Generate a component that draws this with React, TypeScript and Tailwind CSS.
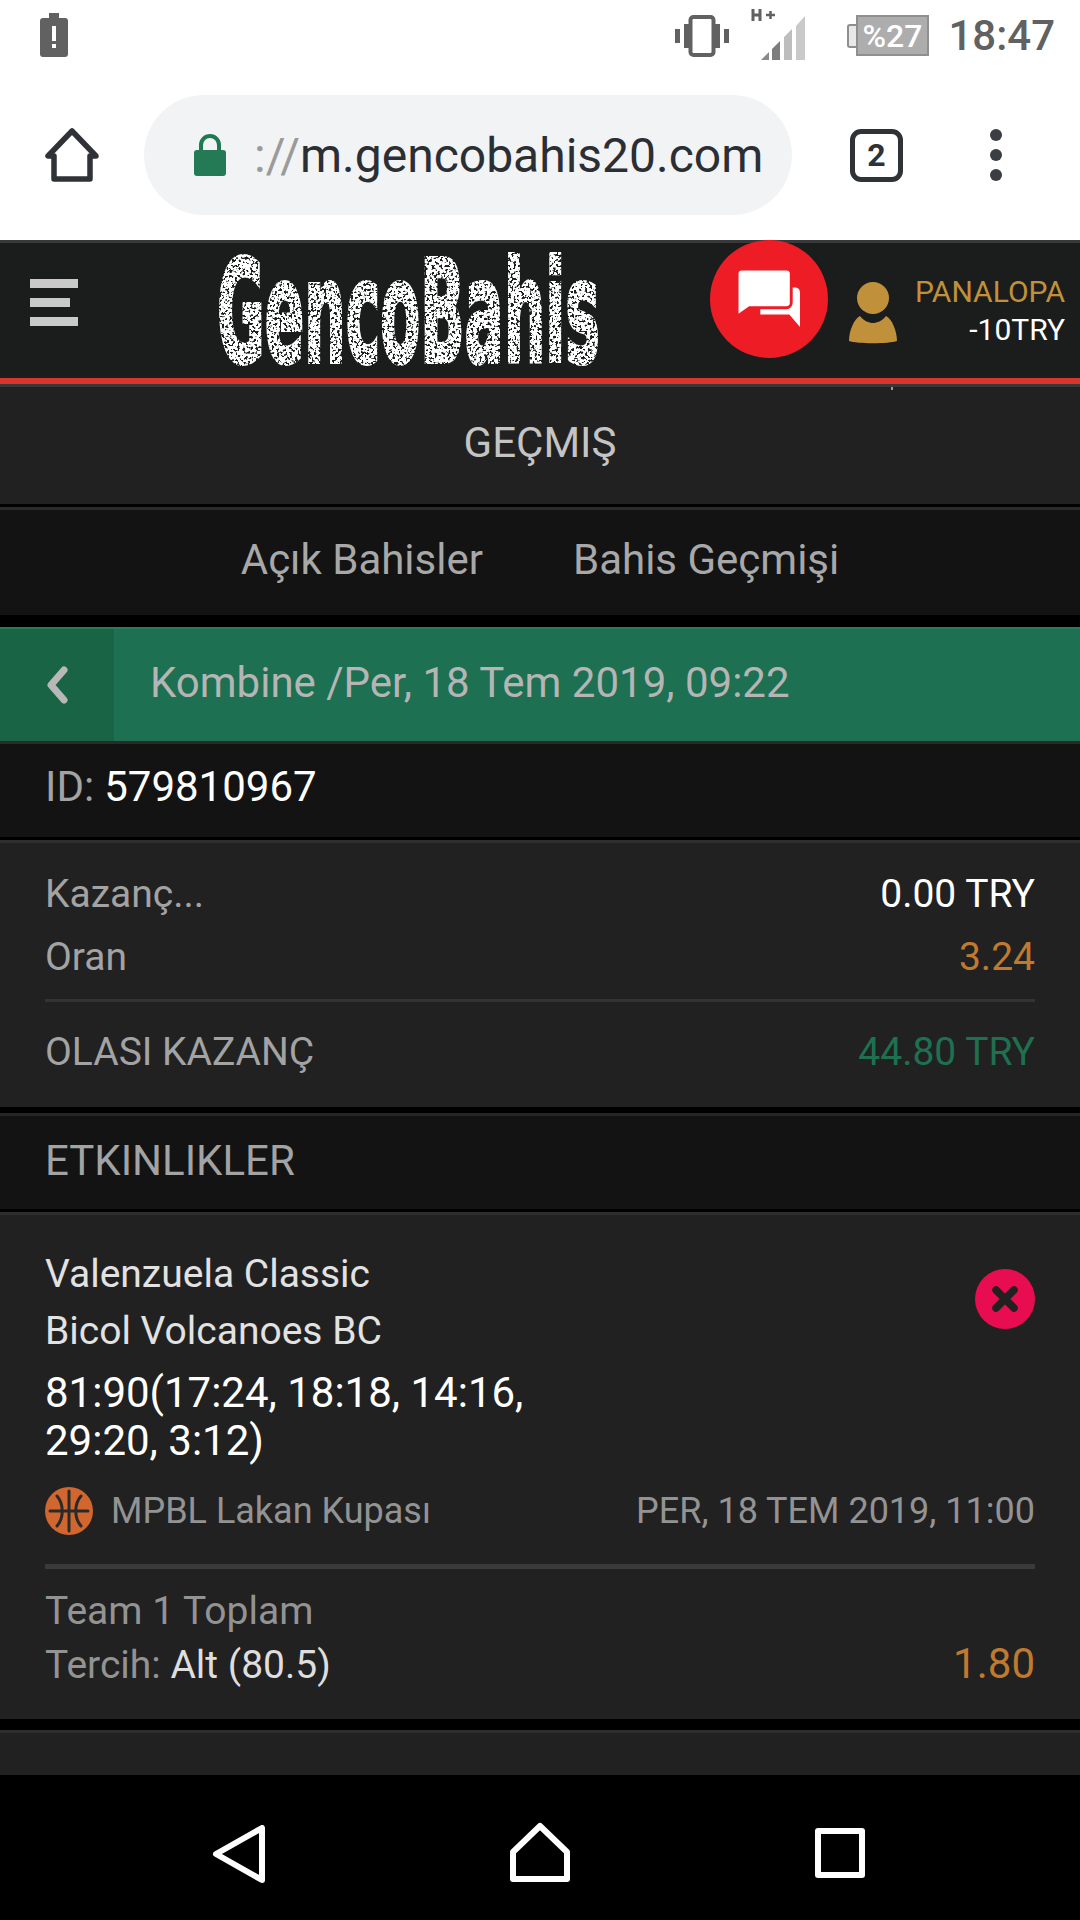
const StatusBar = () => (
  <div className="flex h-[72px] items-center bg-white pl-[40px] pr-[25px]">
    <svg width="28" height="44" viewBox="0 0 28 44" className="mt-[-2px]">
      <path d="M9 0h10v5h6a3 3 0 0 1 3 3v33a3 3 0 0 1-3 3H3a3 3 0 0 1-3-3V8a3 3 0 0 1 3-3h6z" fill="#616161" />
      <rect x="12" y="13" width="4" height="15" fill="#fff" />
      <rect x="12" y="31" width="4" height="4" fill="#fff" />
    </svg>
    <svg width="54" height="42" viewBox="0 0 54 42" className="ml-[607px] mt-[-1px]">
      <rect x="0" y="14" width="5" height="14" fill="#616161" />
      <rect x="9" y="9" width="5" height="24" fill="#616161" />
      <rect x="15.500" y="2" width="23" height="38" rx="3" fill="none" stroke="#616161" strokeWidth="4" />
      <rect x="40" y="9" width="5" height="24" fill="#616161" />
      <rect x="49" y="14" width="5" height="14" fill="#616161" />
    </svg>
    <svg width="60" height="52" viewBox="0 0 60 52" className="ml-[22px] mt-[-4px]">
      <path d="M0 1v12M0 7h7M7 1v12" transform="translate(2 0)" stroke="#616161" strokeWidth="3" fill="none" />
      <path d="M15 7h9M19.500 3v8" stroke="#616161" strokeWidth="2.500" fill="none" />
      <path d="M10 52l8-8v8z" fill="#8a8a8a" />
      <path d="M21 41l8-8v19h-8z" fill="#7d7d7d" />
      <path d="M33 29l8-8v31h-8z" fill="#bdbdbd" />
      <path d="M45 18l9-10v44h-9z" fill="#c9c9c9" />
    </svg>
    <div className="ml-[36px] mt-[-1px] flex h-[41px] w-[82px] items-center">
      <div className="h-[24px] w-[9px] rounded-l-[3px] border-y-2 border-l-2 border-[#8f8f8f] bg-[#e8e8e8]" />
      <div className="flex h-full flex-1 items-center justify-center border-2 border-[#8f8f8f] bg-[#adadad] text-[32px] font-medium leading-none text-white">
        %27
      </div>
    </div>
    <div className="ml-auto text-[42px] font-medium leading-none text-[#616161]">18:47</div>
  </div>
);

const Toolbar = () => (
  <div className="flex h-[168px] items-center bg-white pl-[45px]">
    <svg width="54" height="54" viewBox="0 0 54 54" className="mt-[-2px]">
      <path d="M27 3 3 28h6v23h36V28h6z" fill="none" stroke="#2f3237" strokeWidth="5.500" strokeLinejoin="round" />
    </svg>
    <div className="ml-[45px] mt-[-2px] flex h-[120px] w-[648px] items-center rounded-full bg-[#f1f3f4] pl-[50px]">
      <svg width="32" height="42" viewBox="0 0 32 42">
        <path d="M7 18v-7a9 9 0 0 1 18 0v7" fill="none" stroke="#1e7a52" strokeWidth="4" />
        <rect x="0" y="16" width="32" height="26" rx="3" fill="#237a55" />
      </svg>
      <div className="ml-[28px] mt-[2px] text-[48px] leading-none text-[#2b2e33]">
        <span className="text-[#9a9a9a]">://</span>m.gencobahis20.com
      </div>
    </div>
    <div className="ml-[58px] mt-[-2px] flex h-[53px] w-[53px] items-center justify-center rounded-[11px] border-[5px] border-[#2f3237] text-[32px] font-bold leading-none text-[#2f3237]">
      2
    </div>
    <div className="ml-[87px] mt-[-2px] flex flex-col gap-[8px]">
      <span className="h-[12px] w-[12px] rounded-full bg-[#3a3d42]" />
      <span className="h-[12px] w-[12px] rounded-full bg-[#3a3d42]" />
      <span className="h-[12px] w-[12px] rounded-full bg-[#3a3d42]" />
    </div>
  </div>
);

const Logo = () => (
  <svg width="390" height="116" viewBox="0 0 390 116">
    <defs>
      <filter id="speckle" x="0" y="0" width="100%" height="100%" filterUnits="objectBoundingBox">
        <feTurbulence type="fractalNoise" baseFrequency="0.38" numOctaves="2" seed="7" result="n" />
        <feColorMatrix in="n" type="matrix" values="0 0 0 0 0 0 0 0 0 0 0 0 0 0 0 0 0 0 -11 6.900" result="m" />
        <feComposite in="SourceGraphic" in2="m" operator="in" />
      </filter>
    </defs>
    <g filter="url(#speckle)">
      {/* squeezed wide bold font, closest thing to the logo's condensed letters */}
      <text
        transform="translate(3 110) scale(0.41 1)"
        fontFamily="'DejaVu Sans','Liberation Sans',sans-serif"
        fontWeight="700"
        fontSize="142"
        fill="#fff"
        stroke="#fff"
        strokeWidth="4"
      >
        GencoBahis
      </text>
    </g>
  </svg>
);

const SiteHeader = () => (
  <div className="relative border-y-[3px] border-[#36383a]">
    <div className="flex h-[135px] items-center bg-[#1b1d1d] pl-[30px] pr-[15px]">
      <div className="mt-[-16px] flex flex-col gap-[10px]">
        <div className="h-[9px] w-[48px] bg-[#c9c9c9]" />
        <div className="h-[9px] w-[40px] bg-[#c9c9c9]" />
        <div className="h-[9px] w-[48px] bg-[#c9c9c9]" />
      </div>
      <div className="ml-[136px] mt-[-2px]">
        <Logo />
      </div>
      <div className="ml-[106px] mt-[-23px] flex h-[118px] w-[118px] items-center justify-center rounded-full bg-[#ee1c25]">
        <svg width="64" height="60" viewBox="0 0 66 62">
          <path d="M24 36h30l11 13V13a5 5 0 0 0-5-5H24z" fill="#fff" transform="translate(0 11)" />
          <path d="M5 0h46a5 5 0 0 1 5 5v30a5 5 0 0 1-5 5H13L0 49V5a5 5 0 0 1 5-5z" fill="#fff" stroke="#ee1c25" strokeWidth="3" />
        </svg>
      </div>
      <svg width="48" height="62" viewBox="0 0 48 62" className="ml-[21px] mt-[4px]">
        <circle cx="24" cy="16" r="16" fill="#c0913a" />
        <path d="M11 34c4 5 9 7 13 7s9-2 13-7c6 3 11 15 11 25-8 3-40 3-48 0 0-10 5-22 11-25z" fill="#c0913a" />
      </svg>
      <div className="ml-auto mt-[1px] flex flex-col items-end gap-[8px] text-[30px] leading-[30px]">
        <span className="text-[#c0913a]">PANALOPA</span>
        <span className="text-white">-10TRY</span>
      </div>
    </div>
    <div className="h-[6px] bg-[#d8362d]" />
    <div className="absolute bottom-[-6px] left-[891px] h-[3px] w-[2px] bg-[#9a9a9a]" />
  </div>
);

const Row = ({ label, value, color }: { label: string; value: string; color: string }) => (
  <div className="flex h-[63px] items-center justify-between">
    <span className="text-[#a3a3a3]">{label}</span>
    <span className={color}>{value}</span>
  </div>
);

export default function App() {
  return (
    <div className="flex h-[1920px] w-[1080px] flex-col overflow-hidden bg-black font-['Roboto',sans-serif]">
      <StatusBar />
      <Toolbar />
      <SiteHeader />

      <div className="flex h-[117px] items-center justify-center bg-[#212121] pb-[6px] text-[42px] text-[#c4c4c4]">
        GEÇMIŞ
      </div>

      <div className="mt-[3px] flex h-[108px] items-center justify-center gap-[90px] border-t-[3px] border-[#2a2a2a] bg-[#131313] pb-[6px] text-[42px] text-[#a8a8a8]">
        <span>Açık Bahisler</span>
        <span>Bahis Geçmişi</span>
      </div>

      <div className="mt-[12px] flex h-[114px] border-t-2 border-[#2a7b5c] bg-[#1d7051]">
        <div className="flex w-[114px] items-center justify-center bg-[#1a6446]">
          <svg width="24" height="38" viewBox="0 0 24 38">
            <path d="M19 4 6 19l13 15" fill="none" stroke="#b8b8b8" strokeWidth="7" strokeLinecap="round" strokeLinejoin="round" />
          </svg>
        </div>
        <div className="flex items-center pb-[5px] pl-[36px] text-[42px] text-[#b5b5b5]">
          Kombine /Per, 18 Tem 2019, 09:22
        </div>
      </div>

      <div className="flex h-[96px] items-center border-t-[3px] border-[#2a2a2a] bg-[#131313] px-[45px] pb-[8px] text-[42px] text-white">
        <span className="mr-[10px] text-[#a3a3a3]">ID:</span>579810967
      </div>

      <div className="mt-[3px] flex h-[267px] flex-col border-t-[3px] border-[#2e2e2e] bg-[#212121] px-[45px] pt-[20px] text-[39px]">
        <Row label="Kazanç..." value="0.00 TRY" color="text-white" />
        <Row label="Oran" value="3.24" color="text-[#c07a30]" />
        <div className="mt-[10px] border-t-[3px] border-[#333]" />
        <div className="mt-[23px] flex h-[55px] items-center justify-between">
          <span className="text-[#a3a3a3]">OLASI KAZANÇ</span>
          <span className="text-[#1f7050]">44.80 TRY</span>
        </div>
      </div>

      <div className="mt-[6px] flex h-[96px] items-center border-t-[3px] border-[#262626] bg-[#131313] px-[45px] pb-[4px] text-[42px] text-[#a3a3a3]">
        ETKINLIKLER
      </div>

      <div className="mt-[3px] flex h-[507px] flex-col border-t-[3px] border-[#2e2e2e] bg-[#212121] px-[45px] pt-[31px]">
        <div className="flex items-start justify-between">
          <div>
            <div className="text-[39px] leading-[57px] text-[#e2e2e2]">Valenzuela Classic</div>
            <div className="text-[39px] leading-[57px] text-[#e2e2e2]">Bicol Volcanoes BC</div>
            <div className="mt-[9px] w-[520px] text-[42px] leading-[48px] text-white">
              81:90(17:24, 18:18, 14:16, 29:20, 3:12)
            </div>
          </div>
          <div className="mt-[23px] flex h-[60px] w-[60px] items-center justify-center rounded-full bg-[#e80c50]">
            <svg width="28" height="28" viewBox="0 0 28 28">
              <path d="M5 5l18 18M23 5L5 23" stroke="#212121" strokeWidth="7.500" strokeLinecap="round" />
            </svg>
          </div>
        </div>

        <div className="mt-[21px] flex h-[50px] items-center justify-between text-[36px] text-[#939393]">
          <div className="flex items-center">
            <svg width="48" height="48" viewBox="0 0 48 48">
              <circle cx="24" cy="24" r="24" fill="#d1662f" />
              <path d="M24 4v40M5 24h38M12 9c7 8 7 22 0 30M36 9c-7 8-7 22 0 30" fill="none" stroke="#2a2a2a" strokeWidth="3" strokeLinecap="round" />
            </svg>
            <span className="ml-[18px]">MPBL Lakan Kupası</span>
          </div>
          <span>PER, 18 TEM 2019, 11:00</span>
        </div>

        <div className="mt-[28px] border-t-[5px] border-[#3a3a3a]" />

        <div className="mt-[15px] text-[39px] leading-[54px] text-[#939393]">Team 1 Toplam</div>
        <div className="flex items-center justify-between text-[39px] leading-[54px]">
          <span className="text-[#939393]">
            Tercih: <span className="text-[#dedede]">Alt (80.5)</span>
          </span>
          <span className="mt-[-2px] text-[42px] text-[#c07a30]">1.80</span>
        </div>
      </div>

      <div className="mt-[11px] h-[45px] border-t-[3px] border-[#2e2e2e] bg-[#212121]" />

      <div className="flex h-[145px] items-start bg-black pl-[212px] pt-[50px]">
        <svg width="56" height="58" viewBox="0 0 56 58" className="mr-[242px]">
          <path d="M50 3v52L4 29z" fill="none" stroke="#fff" strokeWidth="6" strokeLinejoin="round" />
        </svg>
        <svg width="60" height="60" viewBox="0 0 60 60" className="mr-[245px] mt-[-3px]">
          <path d="M30 4 3 30v27h54V30z" fill="none" stroke="#fff" strokeWidth="6" strokeLinejoin="round" />
        </svg>
        <svg width="50" height="50" viewBox="0 0 50 50" className="mt-[3px]">
          <rect x="3" y="3" width="44" height="44" fill="none" stroke="#fff" strokeWidth="6" strokeLinejoin="round" />
        </svg>
      </div>
    </div>
  );
}
